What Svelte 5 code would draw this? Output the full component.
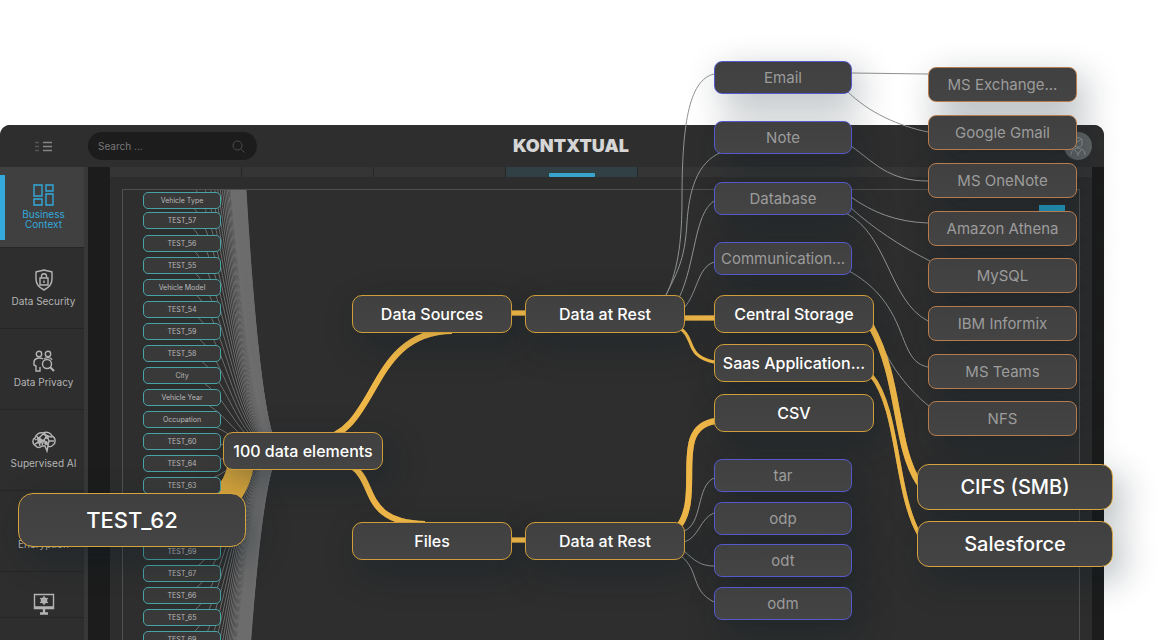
<script lang="ts">
	type Node = { label: string; x: number; y: number; kind: string };

	const navItems = [
		{ label: 'Business Context', icon: 'grid', active: true },
		{ label: 'Data Security', icon: 'shield' },
		{ label: 'Data Privacy', icon: 'people' },
		{ label: 'Supervised AI', icon: 'brain' },
		{ label: 'Encryption', icon: '' },
		{ label: '', icon: 'monitor' }
	];

	const tabs = [0, 1, 2, 3, 4, 5, 6];
	let activeTab = $state(3);

	const elements: [string, number][] = [
		['Vehicle Type', 192],
		['TEST_57', 212],
		['TEST_56', 235],
		['TEST_55', 257],
		['Vehicle Model', 279],
		['TEST_54', 301],
		['TEST_59', 323],
		['TEST_58', 345],
		['City', 367],
		['Vehicle Year', 389],
		['Occupation', 411],
		['TEST_60', 433],
		['TEST_64', 455],
		['TEST_63', 477],
		['TEST_69', 543],
		['TEST_67', 565],
		['TEST_66', 587],
		['TEST_65', 609],
		['TEST_69', 631]
	];

	const nodes: Node[] = [
		{ label: 'Email', x: 714, y: 61, kind: 'type' },
		{ label: 'Note', x: 714, y: 121, kind: 'type' },
		{ label: 'Database', x: 714, y: 182, kind: 'type' },
		{ label: 'Communication...', x: 714, y: 242, kind: 'type' },
		{ label: 'tar', x: 714, y: 459, kind: 'type' },
		{ label: 'odp', x: 714, y: 502, kind: 'type' },
		{ label: 'odt', x: 714, y: 544, kind: 'type' },
		{ label: 'odm', x: 714, y: 587, kind: 'type' },
		{ label: 'MS Exchange...', x: 928, y: 67, kind: 'app' },
		{ label: 'Google Gmail', x: 928, y: 115, kind: 'app' },
		{ label: 'MS OneNote', x: 928, y: 163, kind: 'app' },
		{ label: 'Amazon Athena', x: 928, y: 211, kind: 'app' },
		{ label: 'MySQL', x: 928, y: 258, kind: 'app' },
		{ label: 'IBM Informix', x: 928, y: 306, kind: 'app' },
		{ label: 'MS Teams', x: 928, y: 354, kind: 'app' },
		{ label: 'NFS', x: 928, y: 401, kind: 'app' },
		{ label: 'Data Sources', x: 352, y: 295, kind: 'path' },
		{ label: 'Data at Rest', x: 525, y: 295, kind: 'path' },
		{ label: 'Files', x: 352, y: 522, kind: 'path' },
		{ label: 'Data at Rest', x: 525, y: 522, kind: 'path' },
		{ label: '100 data elements', x: 223, y: 432, kind: 'path' },
		{ label: 'Central Storage', x: 714, y: 295, kind: 'path' },
		{ label: 'Saas Application...', x: 714, y: 344, kind: 'path' },
		{ label: 'CSV', x: 714, y: 394, kind: 'path' },
		{ label: 'CIFS (SMB)', x: 917, y: 464, kind: 'leaf' },
		{ label: 'Salesforce', x: 917, y: 521, kind: 'leaf' },
		{ label: 'TEST_62', x: 18, y: 493, kind: 'root' }
	];

	const thinLinks = [
		'M714 74C688 80 682 128 682 200C682 255 674 280 664 299',
		'M722 152C696 162 689 193 687 222C685 262 676 274 664 299',
		'M714 201C694 214 696 262 679 298',
		'M714 262C697 268 698 292 684 308',
		'M852 73L928 74',
		'M847 91C869 113 899 126 928 132',
		'M851 146C874 162 888 181 928 181',
		'M851 197C872 212 896 222 928 223',
		'M851 208C873 228 900 246 930 261',
		'M846 213C889 236 889 301 928 321',
		'M849 271C872 284 889 301 901 333C909 353 913 364 928 367',
		'M873 323C884 358 904 386 930 407',
		'M684 531C703 524 696 486 714 478',
		'M684 542C699 538 700 518 714 513',
		'M684 551C695 561 701 566 714 566',
		'M681 556C700 571 690 590 714 602'
	];

	const boldLinks: [string, number][] = [
		['M318 440C380 432 367 332 452 331', 6],
		['M350 465C378 481 359 522 425 524', 6],
		['M510 313H528', 5],
		['M510 540H528', 5],
		['M683 318H716', 5],
		['M681 329C695 338 685 356 714 362', 3],
		['M676 530C706 498 668 427 716 421', 6],
		['M871 326C901 380 894 445 919 483', 6],
		['M871 375C899 408 895 492 919 534', 4]
	];

	// one curve per element, running well past the visible part of the list
	const fan = Array.from({ length: 100 }, (_, i) => {
		const y = 441 + (i - 49) * 22;
		return {
			d: `M178 ${y}C230 ${y} 230 451 282 451`,
			width: Math.abs(i - 49) > 24 ? 3 : 1
		};
	});
</script>

<div class="page">
	<div class="frame">
		<header>
			<button class="menu" aria-label="Toggle menu">
				<svg width="18" height="11" viewBox="0 0 18 11" fill="none" stroke="#858585" stroke-width="1.6">
					<path d="M0 1.5H4M0 5.5H4M0 9.5H4" stroke="#555" />
					<path d="M8 1.5H17M8 5.5H17M8 9.5H17" />
				</svg>
			</button>
			<div class="search">
				<input type="text" placeholder="Search ..." aria-label="Search" />
				<svg width="13" height="13" viewBox="0 0 13 13" fill="none" stroke="#4c4c4c">
					<circle cx="5.5" cy="5.5" r="4.5" />
					<path d="M9 9L12.5 12.5" />
				</svg>
			</div>
			<div class="logo">KONTXTUAL</div>
			<button class="avatar" aria-label="Account">
				<svg width="18" height="20" viewBox="0 0 18 20" fill="none" stroke="#929899" stroke-width="1">
					<path d="M5 8V4C5 1 13 1 13 4V8C13 12 5 12 5 8ZM5 5C9 6 11 5 12 3M2 19C2 14 5 13 9 12C13 13 16 14 16 19M6 14L9 18L12 14M9 18V20" />
				</svg>
			</button>
		</header>

		<div class="body">
			<nav>
				{#each navItems as item}
					<a href="#{item.icon}" class:active={item.active} aria-label={item.label || 'System'}>
						<svg width="24" height="22" viewBox="0 0 24 22" fill="none" stroke="currentColor" stroke-width="1.4">
							{#if item.icon === 'grid'}
								<path d="M2 1H10V12H2ZM14 1H21V7H14ZM2 15H10V21H2ZM14 10H21V21H14Z" />
							{:else if item.icon === 'shield'}
								<path d="M12 1C15 2 18 2 20 3V10C20 16 16 19 12 21C8 19 4 16 4 10V3C6 2 9 2 12 1Z" />
								<path d="M8 9H16V16H8ZM9.500 9V7C9.500 4 14.500 4 14.500 7V9M12 11.500V14" />
							{:else if item.icon === 'people'}
								<circle cx="7" cy="4" r="2.700" />
								<circle cx="16" cy="4" r="2.700" />
								<path d="M11 9C8 7 2 8 2 12V15L4 16V21H8V17M12 9C14 7 19 7 20 10" />
								<circle cx="15" cy="14" r="4.500" />
								<path d="M18 17L22 21" stroke-width="2" />
							{:else if item.icon === 'brain'}
								<path d="M4 15C0 13 0 8 3 7C4 3 8 1 11 2C15 0 19 2 20 5C24 7 24 12 21 14C20 16 17 16 16 15L15 20L13 15H10C8 17 5 17 4 15Z" />
								<path d="M3 9L8 6L7 11L3 13M8 6L11 3L15 5L20 6M7 11L12 9L15 5L17 10L22 10M12 9L10 14M12 9L16 14L17 10M5 5L7 11L8 15M15 5L12 2" />
								<circle cx="8" cy="10" r="2" fill="currentColor" />
								<circle cx="15" cy="6" r="1.200" fill="currentColor" />
								<circle cx="14" cy="12" r="1.200" fill="currentColor" />
							{:else if item.icon === 'monitor'}
								<path d="M2.500 1.500H21.500V15.500H2.500Z" />
								<path d="M2 14.500H22M8 20.500H16M12 16V20" stroke-width="2.400" />
								<circle cx="12" cy="7.500" r="2.200" stroke-width="2" />
								<path d="M12 3V12M8 5.200L16 9.800M8 9.800L16 5.200" stroke-width="1.200" />
							{/if}
						</svg>
						<span>{item.label}</span>
					</a>
				{/each}
			</nav>

			<main>
				<div class="tabs">
					{#each tabs as tab}
						<button class:active={tab === activeTab} aria-label="Tab {tab + 1}" onclick={() => (activeTab = tab)}></button>
					{/each}
				</div>
				<div class="canvas">
					<button class="action" aria-label="Expand"></button>
				</div>
			</main>
		</div>
	</div>

	<div class="diagram">
		<svg class="links" fill="none">
			<defs>
				<clipPath id="canvas-area">
					<rect x="123" y="190" width="400" height="2000" />
				</clipPath>
				<linearGradient id="gold" x1="0" y1="470" x2="0" y2="496" gradientUnits="userSpaceOnUse">
					<stop offset="0" stop-color="#c99d3d" />
					<stop offset="1" stop-color="#e8b03e" />
				</linearGradient>
			</defs>
			<g clip-path="url(#canvas-area)" stroke="#6d6d6d">
				{#each fan as { d, width }}
					<path {d} stroke-width={width} />
				{/each}
			</g>
			<path d="M196 513C226 503 239 489 243 452" stroke="url(#gold)" stroke-width="26" />
			<g stroke="#8f9392">
				{#each thinLinks as d}
					<path {d} />
				{/each}
			</g>
			<g stroke="#efb748">
				{#each boldLinks as [d, width]}
					<path {d} stroke-width={width} />
				{/each}
			</g>
		</svg>

		{#each elements as [label, y]}
			<div class="element" style="top: {y}px">{label}</div>
		{/each}

		{#each nodes as node}
			<div class="shade {node.kind}" style="left: {node.x}px; top: {node.y}px"></div>
		{/each}

		<svg class="links glow" fill="none" stroke="#f0b848">
			{#each boldLinks as [d, width]}
				<path {d} stroke-width={width} />
			{/each}
		</svg>

		{#each nodes as node}
			<div class="node {node.kind}" style="left: {node.x}px; top: {node.y}px">{node.label}</div>
		{/each}
	</div>
</div>

<style>
	:global(body) {
		background: #fff;
	}

	.page {
		position: relative;
		display: flex;
		flex-direction: column;
		min-height: 100vh;
		padding: 125px 64px 0 0;
		box-sizing: border-box;
		overflow: hidden;
		font-family: Inter, 'Open Sans', sans-serif;
	}

	.page * {
		box-sizing: border-box;
	}

	button {
		border: 0;
		padding: 0;
		background: none;
	}

	.frame {
		display: flex;
		flex-direction: column;
		flex: 1;
		background: #1c1c1c;
		border-radius: 10px 10px 0 0;
		overflow: hidden;
	}

	header {
		display: grid;
		grid-template-columns: 88px 169px 1fr 40px;
		align-items: center;
		height: 42px;
		background: #2e2e2e;
	}

	.menu {
		display: flex;
		justify-content: center;
	}

	.search {
		display: flex;
		align-items: center;
		height: 28px;
		padding: 0 12px 0 10px;
		background: #1c1c1c;
		border-radius: 14px;
	}

	.search input {
		flex: 1;
		min-width: 0;
		border: 0;
		padding: 0;
		outline: 0;
		background: none;
		color: #aaa;
		font: 10px Inter, sans-serif;
	}

	.search input::placeholder {
		color: #777;
		opacity: 1;
	}

	.logo {
		padding-left: 256px;
		color: #d6d6d6;
		font-size: 18px;
		font-weight: 900;
		line-height: 24px;
	}

	.avatar {
		display: flex;
		align-items: center;
		justify-content: center;
		width: 28px;
		height: 28px;
		border-radius: 50%;
		background: #606465;
	}

	.body {
		display: flex;
		flex: 1;
		padding-right: 12px;
	}

	nav {
		width: 88px;
		height: 473px;
		flex-shrink: 0;
		overflow: hidden;
		border-right: 4px solid #383838;
		background: #2e2e2e;
	}

	nav a {
		display: flex;
		flex-direction: column;
		align-items: center;
		gap: 3px;
		height: 81px;
		padding: 21px 0 0 3px;
		border-bottom: 1px solid #262626;
		color: #b4b4b4;
		font-size: 10px;
		line-height: 14px;
		text-align: center;
		text-decoration: none;
	}

	nav a svg {
		flex-shrink: 0;
	}

	nav a:last-child {
		height: 46px;
	}

	nav a.active {
		padding-top: 17px;
		background: linear-gradient(#33a9dc, #33a9dc) 0 8px / 5px 65px no-repeat #404040;
		color: #33a9dc;
		line-height: 10px;
	}

	nav a.active span {
		width: 60px;
	}

	main {
		display: flex;
		flex-direction: column;
		flex: 1;
		min-width: 0;
		margin-left: 22px;
		padding-right: 12px;
		background: #2d2d2d;
	}

	.tabs {
		display: flex;
		height: 10px;
		margin-right: -12px;
		background: #353535;
	}

	.tabs button {
		width: 132px;
		border-right: 1px solid #262626;
	}

	.tabs button:nth-child(n + 5) {
		border-right: 0;
	}

	.tabs button.active {
		display: flex;
		justify-content: center;
		align-items: flex-end;
		background: #304045;
	}

	.tabs button.active::after {
		content: '';
		width: 46px;
		height: 4px;
		border-radius: 1px;
		background: #38a4cc;
	}

	.canvas {
		display: flex;
		justify-content: flex-end;
		flex: 1;
		margin: 12px 0 0 12px;
		padding: 15px 14px;
		border: 1px solid #505050;
		border-bottom: 0;
		background: #2e2e2e;
	}

	.action {
		width: 26px;
		height: 16px;
		background: #27a3c9;
	}

	.diagram {
		position: absolute;
		inset: 0;
		overflow: hidden;
		pointer-events: none;
	}

	.links {
		position: absolute;
		inset: 0;
		width: 100%;
		height: 100%;
	}

	.glow {
		opacity: 0.6;
	}

	.element {
		position: absolute;
		left: 143px;
		width: 78px;
		height: 17px;
		border: 1px solid #48a3a6;
		border-radius: 5px;
		background: #393939;
		color: #b9b9b9;
		font-size: 7px;
		line-height: 15px;
		text-align: center;
	}

	.node,
	.shade {
		position: absolute;
		display: flex;
		align-items: center;
		justify-content: center;
		white-space: nowrap;
	}

	.node {
		border: 1px solid;
		background: linear-gradient(#404040, #444);
	}

	.shade {
		box-shadow: 8px 12px 36px rgba(5, 25, 35, 0.32);
	}

	.type {
		width: 138px;
		height: 33px;
		border-color: #5459cc;
		border-radius: 8px;
		color: #9c9c9c;
		font-size: 15px;
	}

	.app {
		width: 149px;
		height: 35px;
		border-color: #b57c50;
		border-radius: 8px;
		color: #9c9c9c;
		font-size: 15px;
	}

	.path {
		width: 160px;
		height: 38px;
		border-color: #d09e38;
		border-radius: 10px;
		color: #fff;
		font-size: 16px;
		font-weight: 500;
	}

	.leaf {
		width: 196px;
		height: 46px;
		border-color: #d6a33d;
		border-radius: 12px;
		color: #fff;
		font-size: 20px;
		font-weight: 500;
	}

	.root {
		width: 228px;
		height: 54px;
		border-color: #d6a33d;
		border-radius: 15px;
		color: #fff;
		font-size: 22px;
		font-weight: 500;
	}
</style>
